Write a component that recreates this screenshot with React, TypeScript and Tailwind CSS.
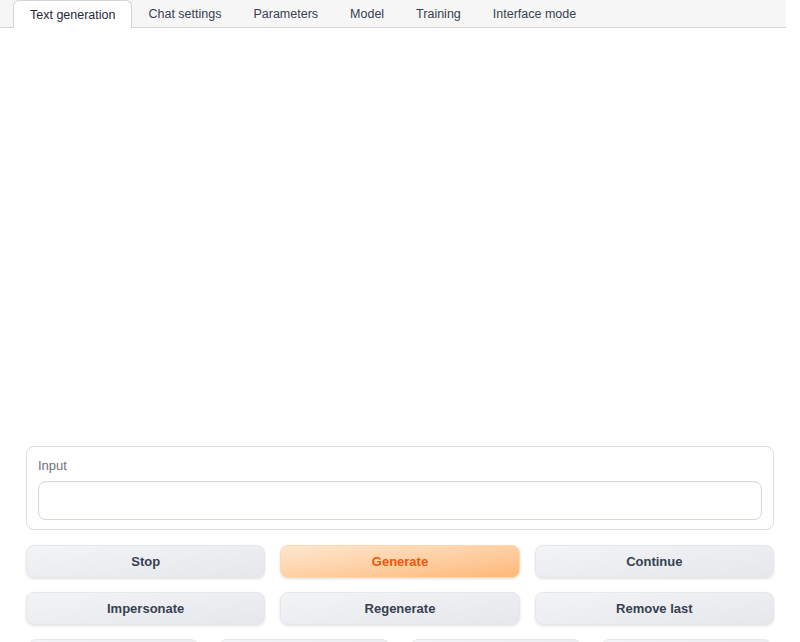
const TABS = [
  "Text generation",
  "Chat settings",
  "Parameters",
  "Model",
  "Training",
  "Interface mode",
];

const ROWS = [
  ["Stop", "Generate", "Continue"],
  ["Impersonate", "Regenerate", "Remove last"],
];

export default function App() {
  return (
    <div
      className="w-[800px] h-[642px] overflow-hidden bg-white text-[13px]"
      style={{ fontFamily: '"Liberation Sans", Arial, sans-serif' }}
    >
      <div className="w-[786px] h-[28px] bg-[#f6f6f6] border-b border-[#d4d4d4] flex items-end pl-[13px] text-[12.5px]">
        {TABS.map((t, i) =>
          i === 0 ? (
            <div
              key={t}
              className="h-[28px] -mb-px px-[16px] pt-px flex items-center bg-white border border-b-0 border-[#d4d4d4] rounded-t-[6px] text-[#1f2937]"
            >
              {t}
            </div>
          ) : (
            <div
              key={t}
              className="h-[27px] px-[16px] pt-[2px] flex items-center text-[#374151]"
            >
              {t}
            </div>
          )
        )}
      </div>

      <div className="px-[26px]">
        <div className="h-[418px]" />

        <div className="rounded-[8px] border border-[#dcdce4] px-[11px] pt-[11px] pb-[9px]">
          <div className="text-[#6b7280] leading-[16px]">Input</div>
          <div className="mt-[7px] h-[39px] rounded-[8px] border border-[#d6d6e0] shadow-[inset_0_1px_2px_rgba(0,0,0,0.04)]" />
        </div>

        <div className="mt-[15px] flex flex-col gap-[14px]">
          {ROWS.map((row) => (
            <div key={row[0]} className="grid grid-cols-3 gap-[15px]">
              {row.map((b) =>
                b === "Generate" ? (
                  <button
                    key={b}
                    className="h-[33px] rounded-[8px] border border-[#fed7aa] bg-gradient-to-br from-[#ffe8cf] to-[#fdb877] text-[#ea580c] font-bold shadow-sm"
                  >
                    {b}
                  </button>
                ) : (
                  <button
                    key={b}
                    className="h-[33px] rounded-[8px] border border-[#e5e7eb] bg-gradient-to-br from-[#f3f4f6] to-[#e5e7eb] text-[#374151] font-bold shadow-sm"
                  >
                    {b}
                  </button>
                )
              )}
            </div>
          ))}
        </div>

        <div className="mt-[14px] px-[2px] grid grid-cols-4 gap-[20px]">
          {[0, 1, 2, 3].map((i) => (
            <div
              key={i}
              className="h-[33px] rounded-[8px] border border-[#e5e7eb] bg-gradient-to-br from-[#f3f4f6] to-[#e5e7eb]"
            />
          ))}
        </div>
      </div>
    </div>
  );
}
